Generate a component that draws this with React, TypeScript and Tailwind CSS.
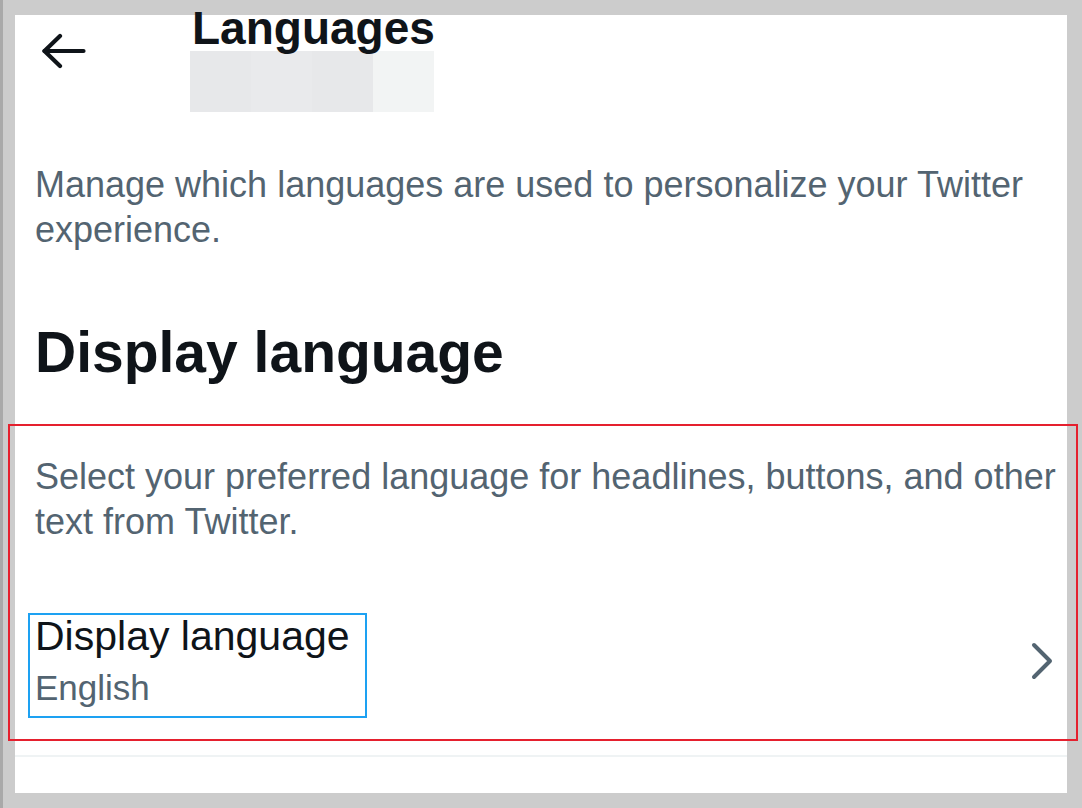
import React from 'react';

const font = { fontFamily: '"Liberation Sans", Arial, sans-serif' };

function BackArrow() {
  return (
    <svg viewBox="0 0 44 36" className="w-[44px] h-[36px] shrink-0" fill="none" stroke="#0f1419" strokeWidth={4.2} strokeLinecap="round" strokeLinejoin="round">
      <path d="M2.5 18H41.5" />
      <path d="M18 3L2.5 18L18 33" />
    </svg>
  );
}

function Chevron() {
  return (
    <svg viewBox="0 0 24 40" className="w-[24px] h-[40px] shrink-0" fill="none" stroke="#536471" strokeWidth={4} strokeLinecap="round" strokeLinejoin="round">
      <path d="M4 4L20 20L4 36" />
    </svg>
  );
}

export default function App() {
  return (
    <div
      className="relative w-[1082px] h-[808px] overflow-hidden bg-[#cccccc] border-l-[3px] border-l-[#a9a9a9] pt-[15px] pr-[15px] pb-[15px] pl-[12px] flex"
      style={font}
    >
      <div className="flex-1 bg-white flex flex-col">
        {/* header */}
        <div className="flex items-start">
          <div className="ml-[27px] mt-[18px]">
            <BackArrow />
          </div>
          <div className="ml-[104px] flex flex-col">
            <h1 className="relative z-10 -mt-[10px] pl-[2px] text-[46px] leading-[46px] font-bold text-[#0f1419]">Languages</h1>
            <div className="flex h-[61px]">
              <div className="w-[61px] bg-[#e7e8ea]" />
              <div className="w-[61px] bg-[#e9eaec]" />
              <div className="w-[61px] bg-[#e7e8ea]" />
              <div className="w-[61px] bg-[#f2f4f4]" />
            </div>
          </div>
        </div>

        <p className="mt-[50px] pl-[20px] text-[36px] leading-[45px] text-[#536471]">
          Manage which languages are used to personalize your Twitter experience.
        </p>

        <h2 className="mt-[68px] pl-[20px] text-[57px] leading-[64px] font-bold text-[#0f1419]">Display language</h2>

        <p className="mt-[70px] pl-[20px] text-[36px] leading-[45px] text-[#536471]">
          Select your preferred language for headlines, buttons, and other text from Twitter.
        </p>

        <div className="mt-[68px] pl-[20px] pr-[13px] flex items-center justify-between">
          <div className="flex flex-col">
            <span className="text-[41px] leading-[48px] text-[#0f1419]">Display language</span>
            <span className="mt-[6px] text-[35px] leading-[44px] text-[#536471]">English</span>
          </div>
          <Chevron />
        </div>

        <div className="mt-[45px] h-[2px] bg-[#eff3f4]" />
      </div>

      {/* annotation boxes */}
      <div className="absolute left-[5px] top-[424px] w-[1070px] h-[317px] border-2 border-[#e5202e] pointer-events-none" />
      <div className="absolute left-[25px] top-[613px] w-[339px] h-[105px] border-2 border-[#1da1f2] pointer-events-none" />
    </div>
  );
}
